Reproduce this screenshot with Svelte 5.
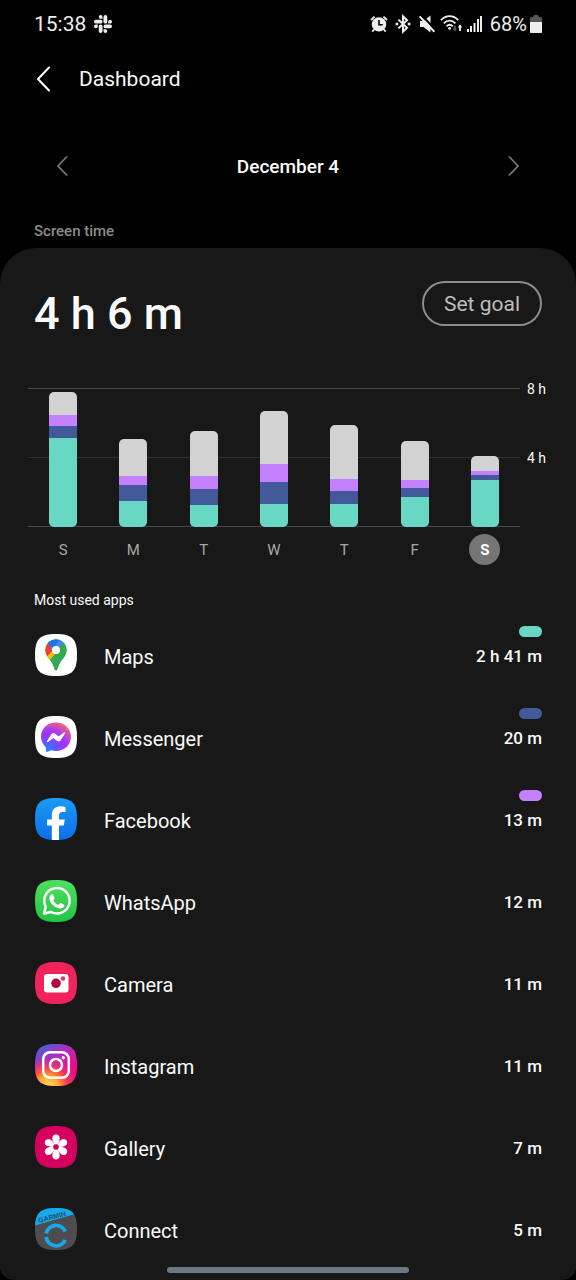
<script>
  const SCALE_MINUTES = 480;

  // Minutes per segment, top to bottom: other, Facebook, Messenger, Maps.
  const days = [
    { label: 'S', name: 'Sunday', parts: [79, 38, 41, 307] },
    { label: 'M', name: 'Monday', parts: [128, 31, 55, 90] },
    { label: 'T', name: 'Tuesday', parts: [155, 45, 55, 76] },
    { label: 'W', name: 'Wednesday', parts: [183, 62, 76, 79] },
    { label: 'T', name: 'Thursday', parts: [186, 41, 45, 79] },
    { label: 'F', name: 'Friday', parts: [135, 28, 31, 104] },
    { label: 'S', name: 'Saturday', parts: [52, 13, 20, 161] }
  ];
  const kinds = ['other', 'violet', 'navy', 'teal'];
  const lines = ['8 h', '4 h', ''];

  const apps = [
    { id: 'maps', name: 'Maps', time: '2 h 41 m', kind: 'teal' },
    { id: 'messenger', name: 'Messenger', time: '20 m', kind: 'navy' },
    { id: 'facebook', name: 'Facebook', time: '13 m', kind: 'violet' },
    { id: 'whatsapp', name: 'WhatsApp', time: '12 m' },
    { id: 'camera', name: 'Camera', time: '11 m' },
    { id: 'instagram', name: 'Instagram', time: '11 m' },
    { id: 'gallery', name: 'Gallery', time: '7 m' },
    { id: 'connect', name: 'Connect', time: '5 m' }
  ];

  let selected = $state(6);
  const squircle = 'M21 0C37 0 42 5 42 21S37 42 21 42 0 37 0 21 5 0 21 0Z';
</script>

<div class="page">
  <div class="status">
    <span class="clock">15:38</span>
    <svg class="slack" width="18" height="18" viewBox="0 0 24 24" fill="#eee">
      {#each [0, 90, 180, 270] as turn}
        <path transform="rotate({turn} 12 12)" d="M5.042 15.165a2.528 2.528 0 0 1-2.520 2.523A2.528 2.528 0 0 1 0 15.165a2.527 2.527 0 0 1 2.522-2.520h2.520ZM6.313 15.165a2.527 2.527 0 0 1 2.521-2.520 2.527 2.527 0 0 1 2.521 2.520v6.313A2.528 2.528 0 0 1 8.834 24a2.528 2.528 0 0 1-2.521-2.522Z" />
      {/each}
    </svg>
    <div class="indicators">
      <svg width="18" height="18" viewBox="0 0 18 18">
        <path d="M1 5 4.6 1.6M17 5 13.4 1.6M4 14.5 2.3 16.6M14 14.5l1.7 2.1" stroke="#eee" stroke-width="1.8" />
        <circle cx="9" cy="9.4" r="7.2" fill="#eee" />
        <path d="M9 5v4.8h3.8" fill="none" stroke="#000" stroke-width="1.6" />
      </svg>
      <svg class="bt" width="16" height="20" viewBox="0 0 16 20" fill="none" stroke="#eee" stroke-width="2">
        <path d="M3.4 5.6 12 13.8 8 17.6V2.4l4 3.8L3.4 14.4" />
        <path d="M.6 10h2.6M12.8 10h2.6" stroke-width="2.4" />
      </svg>
      <svg class="mute" width="18" height="18" viewBox="0 0 18 18">
        <path d="M2 6h3.5l7-5.4v16.8L5.500 12H2Z" fill="#eee" />
        <path d="M3.200 0 19 16" stroke="#000" stroke-width="2" />
        <path d="M1.600 1.400 16.400 16.800" stroke="#eee" stroke-width="2" />
      </svg>
      <svg class="wifi" width="23" height="18" viewBox="0 0 23 18" fill="none" stroke="#eee" stroke-width="1.900">
        <path d="M1 5.200C6-.2 13.400-.2 18.200 5.200M3.800 8.300c3.400-3.600 8.200-3.600 11.600 0M6.600 11.300c2-2 4.200-2 6.200 0" />
        <circle cx="9.600" cy="13.400" r="1.400" fill="#eee" stroke="none" />
        <path d="M14.800 10.500v4.500" stroke="#555" /><path d="m12.600 13.500 2.200 3 2.200-3Z" fill="#555" stroke="none" />
        <path d="M20 16v-4" /><path d="m17.700 12.500 2.300-3.300 2.300 3.300Z" fill="#eee" stroke="none" />
      </svg>
      <svg class="signal" width="16" height="18" viewBox="0 0 16 18" fill="#eee">
        <rect y="14" width="2" height="3" /><rect x="3" y="11" width="2" height="6" /><rect x="6.500" y="8" width="2" height="9" /><rect x="10" y="4" width="2" height="13" /><rect x="13" y="1" width="2" height="16" />
      </svg>
      <span class="percent">68%</span>
      <svg width="12" height="18" viewBox="0 0 12 18">
        <path d="M4 0h4l1 2h2q1 0 1 1v14q0 1-1 1H1q-1 0-1-1V3q0-1 1-1h2Z" fill="#555" />
        <path d="M0 7h12v10q0 1-1 1H1q-1 0-1-1Z" fill="#eee" />
      </svg>
    </div>
  </div>

  <header class="bar">
    <button class="plain" aria-label="Back">
      <svg width="16" height="28" viewBox="0 0 16 28"><path d="M14 2.500 3 14l11 11.500" fill="none" stroke="#fff" stroke-width="2" stroke-linecap="round" stroke-linejoin="round" /></svg>
    </button>
    <h1>Dashboard</h1>
  </header>

  <nav class="dates" aria-label="Day">
    <button class="plain" aria-label="Previous day">
      <svg width="14" height="20" viewBox="0 0 14 20"><path d="M11.500 1 3 10l8.500 9" fill="none" stroke="#777" stroke-width="1.800" stroke-linecap="round" /></svg>
    </button>
    <span>December 4</span>
    <button class="plain" aria-label="Next day">
      <svg width="14" height="20" viewBox="0 0 14 20"><path d="M2.500 1 11 10l-8.500 9" fill="none" stroke="#777" stroke-width="1.800" stroke-linecap="round" /></svg>
    </button>
  </nav>

  <h2 class="section">Screen time</h2>

  <main class="card">
    <div class="summary">
      <span class="total">4 h 6 m</span>
      <button class="goal">Set goal</button>
    </div>

    <div class="chart">
      <div class="lines">
        {#each lines as text, i}
          <div class="line" class:faint={i === 1}><i></i><span>{text}</span></div>
        {/each}
      </div>
      <div class="bars">
        {#each days as day}
          <div class="slot">
            <div class="stack" style:height="{(day.parts.reduce((a, b) => a + b, 0) / SCALE_MINUTES) * 100}%">
              {#each day.parts as minutes, k}
                <div class={kinds[k]} style:flex-grow={minutes}></div>
              {/each}
            </div>
          </div>
        {/each}
      </div>
    </div>
    <div class="days">
      {#each days as day, i}
        <button class="day" class:selected={selected === i} aria-label={day.name} onclick={() => (selected = i)}>{day.label}</button>
      {/each}
    </div>

    <h2 class="subhead">Most used apps</h2>
    <ul>
      {#each apps as app}
        <li>
          <svg class="icon" width="42" height="42" viewBox="0 0 42 42" aria-hidden="true">
            <defs>
              <clipPath id="clip-{app.id}"><path d={squircle} /></clipPath>
            </defs>
            <g clip-path="url(#clip-{app.id})">
              {#if app.id === 'maps'}
                <clipPath id="pin"><path d="M21 5.500c6 0 10.500 4.600 10.500 10.400 0 5.100-3 7.700-5.400 11.100-1.900 2.700-2.800 5-3.600 8-.5 2-2.500 2-3 0-.8-3-1.700-5.300-3.600-8-2.400-3.400-5.400-6-5.400-11.100C10.500 10.100 15 5.500 21 5.500Z" /></clipPath>
                <rect width="42" height="42" fill="#fff" />
                <g clip-path="url(#pin)">
                  <rect width="42" height="42" fill="#34a853" />
                  <path d="M8 22 21 7l4 11-13.500 14Z" fill="#fbbc04" />
                  <path d="M12.500 8 21 15.500 10 27-2 16Z" fill="#fbbc04" />
                  <path d="M5 5h8.500l7.500 8-9 9.500L5 20Z" fill="#ea4335" />
                  <path d="M12.800 9.300 18 13.800 27 4H15Z" fill="#1a73e8" />
                  <path d="M18.500 18.500 30.500 7 24 3.500 15 14Z" fill="#4285f4" />
                  <path d="M12.800 9.300 18 13.800 24.500 6 20 3Z" fill="#1a73e8" />
                  <path d="m29.500 9-16 18.500L20 36l14-12V9Z" fill="#34a853" />
                </g>
                <circle cx="21" cy="16" r="4" fill="#fff" />
              {:else if app.id === 'messenger'}
                <radialGradient id="msg" gradientUnits="userSpaceOnUse" cx="12" cy="36" r="33">
                  <stop offset="0" stop-color="#0a8cff" /><stop offset="0.500" stop-color="#9a35fb" /><stop offset="0.680" stop-color="#a83af5" /><stop offset="1" stop-color="#ff6968" />
                </radialGradient>
                <rect width="42" height="42" fill="#fff" />
                <path d="M21 6.500C12.500 6.500 6 12.600 6 20.700c0 4.200 1.800 7.900 4.900 10.500v3.300c0 1 .9 1.600 1.800 1.200l3.300-1.500c1.600.5 3.200.7 5 .7 8.500 0 15-6.100 15-14.200S29.500 6.500 21 6.500Z" fill="url(#msg)" />
                <path d="m12 25 4.500-7c.7-1.100 2.200-1.400 3.200-.6l3.500 2.600c.3.200.7.200 1 0l4.700-3.600c.6-.5 1.500.3 1.100 1l-4.500 7c-.7 1.100-2.200 1.400-3.200.6L18.800 22.400c-.3-.2-.7-.2-1 0L13.100 26c-.6.500-1.500-.3-1.100-1Z" fill="#fff" />
              {:else if app.id === 'facebook'}
                <linearGradient id="fb" x2="0" y2="1"><stop stop-color="#1c9bf6" /><stop offset="1" stop-color="#0a6fe8" /></linearGradient>
                <rect width="42" height="42" fill="url(#fb)" />
                <path d="M16.800 42V27.500H12v-6h4.800v-3.700c0-6 3-9.500 8.700-9.500 2 0 3.700.2 5 .6v5.200h-3c-2.700 0-3.500 1.400-3.500 3.700v3.700h5.800l-1 6H24V42Z" fill="#fff" />
              {:else if app.id === 'whatsapp'}
                <linearGradient id="wa" x2="0" y2="1"><stop stop-color="#4fe063" /><stop offset="1" stop-color="#23c443" /></linearGradient>
                <rect width="42" height="42" fill="url(#wa)" />
                <path d="m9 33.500 1.800-6.600A12.700 12.700 0 1 1 16 32Z" fill="none" stroke="#fff" stroke-width="2.500" stroke-linejoin="round" />
                <path d="M16.400 14.300c.6-.2 1.500-.2 1.800.5l1.300 3c.2.500 0 1-.3 1.300l-1 1.200c1.300 2.300 3 3.800 5.300 4.700l1.300-1.600c.3-.4.700-.5 1.200-.3l2.800 1.400c.6.300.6.700.5 1.300-.4 1.900-2.400 2.900-4.200 2.700-5.300-.6-9.800-5-10.600-9-.3-2.200.6-4.400 1.900-5.200Z" fill="#fff" />
              {:else if app.id === 'camera'}
                <rect width="42" height="42" fill="#f0235c" />
                <rect x="9" y="12" width="24.500" height="18.500" rx="3" fill="#fff" />
                <circle cx="21" cy="21.300" r="4.800" fill="#b4063c" />
                <circle cx="28" cy="16.500" r="2.200" fill="#e0386c" />
              {:else if app.id === 'instagram'}
                <linearGradient id="ig1" x1="0.200" y1="0" x2="0.900" y2="1"><stop stop-color="#4a5fd8" /><stop offset="0.350" stop-color="#b02bc0" /><stop offset="0.700" stop-color="#ee0a88" /><stop offset="1" stop-color="#f5127a" /></linearGradient>
                <radialGradient id="ig2" gradientUnits="userSpaceOnUse" cx="13" cy="43" r="30"><stop stop-color="#ffdc62" /><stop offset="0.350" stop-color="#ffab35" /><stop offset="0.600" stop-color="#ff5533" stop-opacity="0.900" /><stop offset="1" stop-color="#f0208a" stop-opacity="0" /></radialGradient>
                <rect width="42" height="42" fill="url(#ig1)" /><rect width="42" height="42" fill="url(#ig2)" />
                <g fill="none" stroke="#fff" stroke-width="2.500"><rect x="8.200" y="8.200" width="25.600" height="25.600" rx="7" /><circle cx="21" cy="21" r="6" /></g>
                <circle cx="28.300" cy="13.800" r="1.700" fill="#fff" />
              {:else if app.id === 'gallery'}
                <rect width="42" height="42" fill="#d5005d" />
                {#each [0, 60, 120, 180, 240, 300] as turn}
                  <path d="M21 20.500c-1.200-1.600-3.700-5-3.700-8.200 0-2.200 1.600-3.700 3.700-3.700s3.700 1.500 3.700 3.700c0 3.200-2.500 6.600-3.700 8.200Z" fill="#fff" transform="rotate({turn} 21 21)" />
                {/each}
                <circle cx="21" cy="21" r="2.800" fill="#d5005d" />
              {:else}
                <rect width="42" height="42" fill="#4d4d4f" />
                <path d="M0 0h42v5.500L0 17.500Z" fill="#14aaee" />
                <text x="4" y="15" transform="rotate(-15 4 15)" font-family="Liberation Sans, sans-serif" font-size="7" font-weight="700" fill="#27506a">GARMIN</text>
                <path d="M11.200 25.500A10 10 0 0 1 30.200 23.500M11.200 29A10 10 0 0 0 30.200 32" fill="none" stroke="#14aaee" stroke-width="3.800" />
              {/if}
            </g>
          </svg>
          <span class="name">{app.name}</span>
          <div class="usage">
            <i class="pill {app.kind ?? ''}"></i>
            <span>{app.time}</span>
          </div>
        </li>
      {/each}
    </ul>
  </main>
  <div class="handle"></div>
</div>

<style>
  :global(body) {
    margin: 0;
    background: #000;
  }
  .page {
    position: relative;
    font-family: Roboto, sans-serif;
    color: #fafafa;
    background: #000;
  }
  button {
    font-family: inherit;
    padding: 0;
    background: none;
    border: 0;
    color: inherit;
    cursor: pointer;
  }
  svg {
    display: block;
    flex: none;
  }
  h1, h2, ul {
    margin: 0;
    padding: 0;
    font-weight: 400;
  }
  .status {
    display: flex;
    align-items: center;
    height: 48px;
    padding: 0 34px;
    font-size: 21px;
    color: #eee;
  }
  .slack {
    margin-left: 8px;
  }
  .indicators {
    display: flex;
    align-items: center;
    gap: 7px;
    margin-left: auto;
  }
  .wifi {
    margin-left: -3px;
    margin-right: -3px;
  }
  .percent {
    margin-right: -4px;
    font-size: 20px;
  }
  .bar {
    display: flex;
    align-items: center;
    gap: 28px;
    height: 62px;
    padding: 0 35px;
  }
  h1 {
    font-size: 21px;
  }
  .dates {
    display: flex;
    align-items: center;
    justify-content: space-between;
    height: 112px;
    padding: 0 55px;
    font-size: 19px;
    font-weight: 500;
  }
  .section {
    height: 26px;
    padding: 0 34px;
    font-size: 15px;
    line-height: 18px;
    font-weight: 500;
    color: #8c8c8c;
  }
  .card {
    padding-bottom: 10px;
    background: #181818;
    border-radius: 36px 36px 16px 16px / 36px 36px 12px 12px;
  }
  .summary {
    display: flex;
    align-items: center;
    justify-content: space-between;
    height: 130px;
    padding: 0 34px;
  }
  .total {
    font-size: 45px;
    font-weight: 500;
  }
  .goal {
    width: 120px;
    height: 45px;
    margin-bottom: 19px;
    border: 2px solid #8c8c8c;
    border-radius: 23px;
    font-size: 21px;
    color: #bdbdbd;
  }
  .chart {
    display: grid;
    height: 159px;
    margin-left: 28px;
  }
  .lines, .bars {
    grid-area: 1 / 1;
    min-height: 0;
  }
  .lines {
    display: flex;
    flex-direction: column;
    justify-content: space-between;
  }
  .line {
    display: flex;
    align-items: center;
    height: 21px;
    font-size: 14px;
  }
  .line i {
    flex: 1;
    height: 1px;
    background: #484848;
  }
  .faint i {
    background: #303030;
  }
  .line span {
    width: 49px;
    padding-left: 7px;
  }
  .bars, .days {
    display: grid;
    grid-template-columns: repeat(7, 1fr);
    margin-right: 56px;
  }
  .bars {
    z-index: 1;
    margin-top: 10px;
    margin-bottom: 10px;
  }
  .slot {
    display: flex;
    align-items: flex-end;
    justify-content: center;
    min-height: 0;
  }
  .stack {
    display: flex;
    flex-direction: column;
    width: 28px;
    border-radius: 5px;
    overflow: hidden;
  }
  .stack div {
    flex-basis: 0;
  }
  .other {
    background: #d2d2d2;
  }
  .violet {
    background: #c580ff;
  }
  .navy {
    background: #425a9a;
  }
  .teal {
    background: #68d8c4;
  }
  .days {
    justify-items: center;
    height: 42px;
    margin-left: 28px;
  }
  .day {
    width: 31px;
    height: 31px;
    margin-top: -3px;
    border-radius: 50%;
    font-size: 15px;
    color: #a8a8a8;
  }
  .selected {
    background: #757575;
    color: #fff;
    font-weight: 700;
  }
  .subhead {
    height: 35px;
    padding: 0 34px;
    line-height: 42px;
    font-size: 14px;
  }
  ul {
    list-style: none;
  }
  li {
    display: flex;
    align-items: center;
    height: 82px;
    padding: 0 34px;
  }
  .icon {
    margin-left: 1px;
  }
  .name {
    flex: 1;
    margin-left: 27px;
    padding-top: 3px;
    font-size: 20px;
  }
  .usage {
    display: flex;
    flex-direction: column;
    align-items: flex-end;
    gap: 7px;
    height: 58px;
    font-size: 17px;
    line-height: 24px;
    font-weight: 500;
  }
  .pill {
    width: 23px;
    height: 11px;
    border-radius: 6px;
  }
  .handle {
    position: absolute;
    bottom: 7px;
    left: 29%;
    right: 29%;
    height: 6px;
    border-radius: 3px;
    background: #6c7884;
  }
</style>
